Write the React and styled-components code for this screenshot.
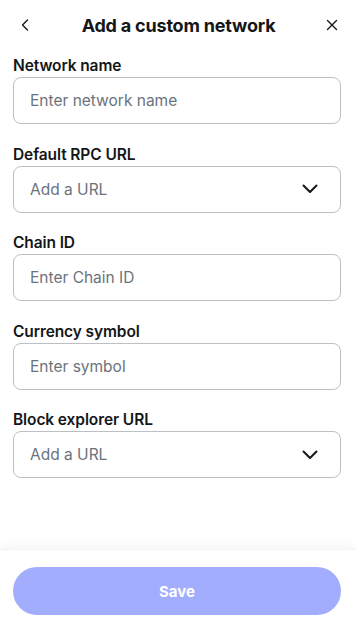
import React from "react";
import styled, { createGlobalStyle } from "styled-components";

const Global = createGlobalStyle`
  html, body { margin: 0; padding: 0; background: #fff; }
  body { font-family: "Inter", "Noto Sans", sans-serif; color: #141618; }
  * { box-sizing: border-box; }
`;

const Page = styled.div`
  display: flex;
  flex-direction: column;
  width: 356px;
  height: 624px;
  background: #fff;
`;

const Header = styled.div`
  display: flex;
  align-items: center;
  justify-content: space-between;
  height: 50px;
  padding: 0 16px 0 17px;
`;

const IconButton = styled.button`
  display: flex;
  align-items: center;
  justify-content: center;
  width: 16px;
  height: 20px;
  padding: 0;
  border: none;
  background: none;
  color: #141618;
  cursor: pointer;
`;

const Title = styled.h1`
  margin: 0;
  font-size: 18px;
  font-weight: 700;
  letter-spacing: -0.2px;
`;

const Body = styled.div`
  flex: 1;
  display: flex;
  flex-direction: column;
  gap: 20.5px;
  padding: 6px 15px 0 13px;
`;

const Field = styled.div`
  display: flex;
  flex-direction: column;
  gap: 1px;
`;

const Label = styled.label`
  font-size: 15.5px;
  font-weight: 600;
  line-height: 20px;
  letter-spacing: -0.1px;
`;

const Box = styled.div`
  display: flex;
  align-items: center;
  justify-content: space-between;
  height: 47px;
  padding: 0 22px 0 16px;
  border: 1px solid #bbc0c5;
  border-radius: 8px;
`;

const Input = styled.input`
  flex: 1;
  border: none;
  outline: none;
  padding: 0;
  font-family: inherit;
  font-size: 15.5px;
  color: #141618;
  &::placeholder { color: #6a737d; }
`;

const Placeholder = styled.span`
  font-size: 15.5px;
  color: #6a737d;
`;

const Footer = styled.div`
  padding: 17px 15px 9px 13px;
  box-shadow: 0 -4px 10px rgba(0, 0, 0, 0.04);
  border-top: 1px solid #f2f3f4;
`;

const SaveButton = styled.button`
  width: 100%;
  height: 48px;
  border: none;
  border-radius: 24px;
  background: #a3adfe;
  color: #fff;
  font-family: inherit;
  font-size: 15px;
  font-weight: 700;
`;

const Chevron = () => (
  <svg width="16" height="10" viewBox="0 0 16 10" fill="none">
    <path d="M1.5 1.5 L8 8 L14.5 1.5" stroke="#141618" strokeWidth="2" strokeLinecap="round" strokeLinejoin="round" />
  </svg>
);

const TextField = ({ label, placeholder }) => (
  <Field>
    <Label>{label}</Label>
    <Box>
      <Input placeholder={placeholder} />
    </Box>
  </Field>
);

const SelectField = ({ label, placeholder }) => (
  <Field>
    <Label>{label}</Label>
    <Box>
      <Placeholder>{placeholder}</Placeholder>
      <Chevron />
    </Box>
  </Field>
);

export default function App() {
  return (
    <Page>
      <Global />
      <Header>
        <IconButton aria-label="Back">
          <svg width="8" height="12" viewBox="0 0 8 12" fill="none">
            <path d="M6.5 1 L1.5 6 L6.5 11" stroke="#141618" strokeWidth="1.4" strokeLinecap="round" strokeLinejoin="round" />
          </svg>
        </IconButton>
        <Title>Add a custom network</Title>
        <IconButton aria-label="Close">
          <svg width="12" height="12" viewBox="0 0 12 12" fill="none">
            <path d="M1.5 1.5 L10.5 10.5 M10.5 1.5 L1.5 10.5" stroke="#141618" strokeWidth="1.4" strokeLinecap="round" />
          </svg>
        </IconButton>
      </Header>
      <Body>
        <TextField label="Network name" placeholder="Enter network name" />
        <SelectField label="Default RPC URL" placeholder="Add a URL" />
        <TextField label="Chain ID" placeholder="Enter Chain ID" />
        <TextField label="Currency symbol" placeholder="Enter symbol" />
        <SelectField label="Block explorer URL" placeholder="Add a URL" />
      </Body>
      <Footer>
        <SaveButton disabled>Save</SaveButton>
      </Footer>
    </Page>
  );
}
